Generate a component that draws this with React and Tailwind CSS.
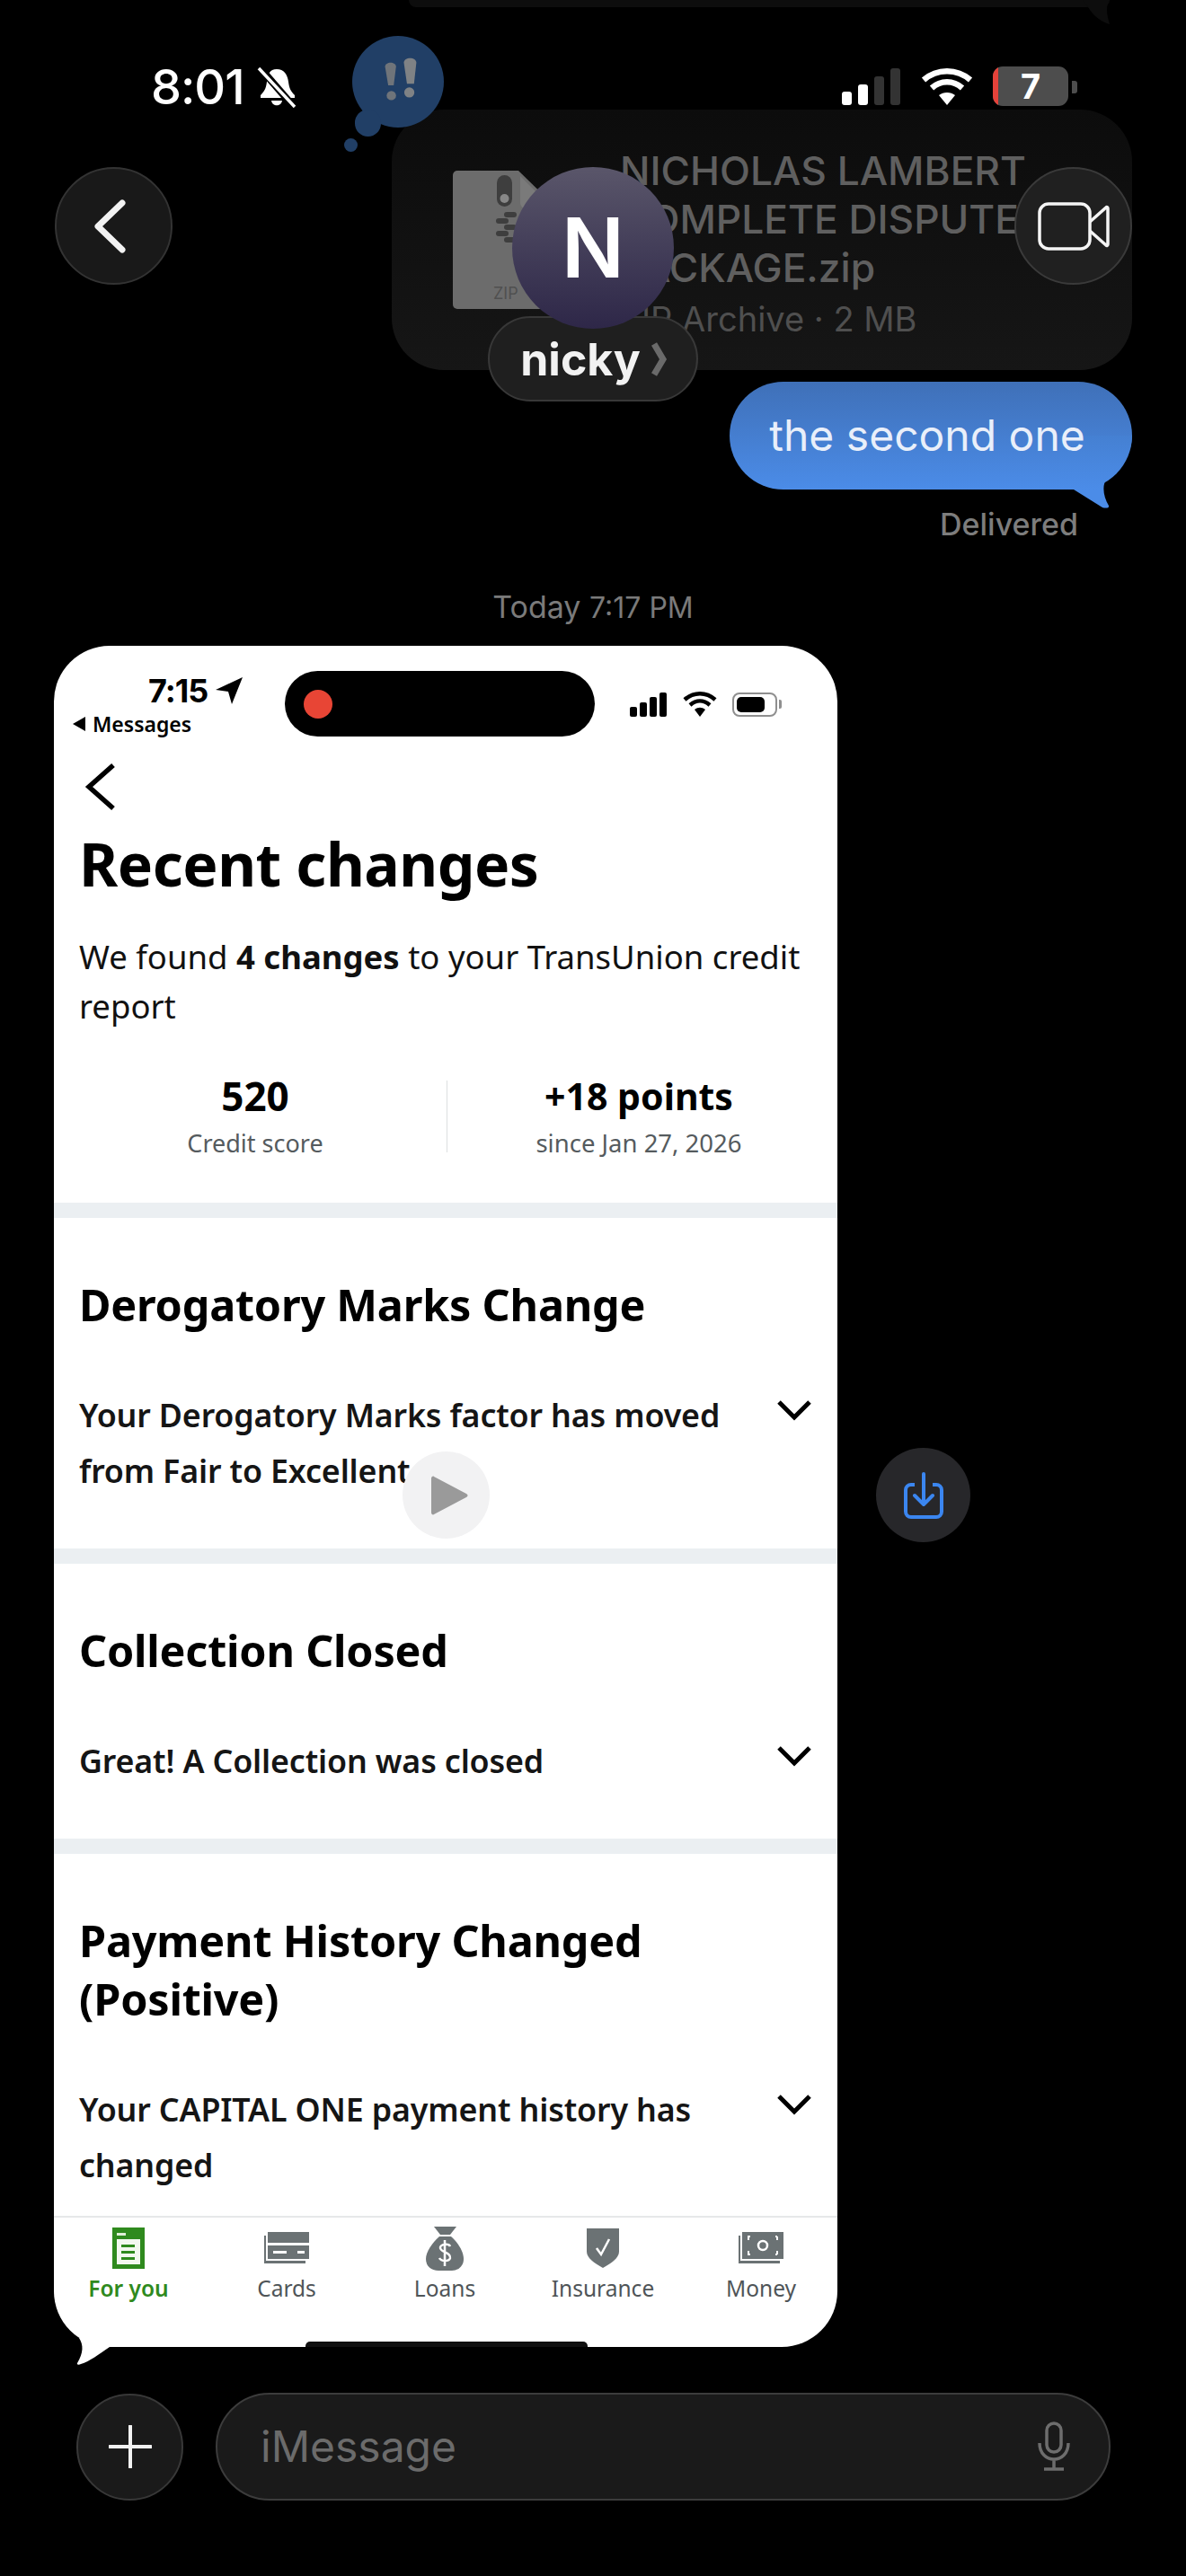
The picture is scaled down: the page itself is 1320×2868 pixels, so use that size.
const tabs = [
  { label: "For you", active: true, icon: <ForYouIcon /> },
  { label: "Cards", icon: <CardsIcon /> },
  { label: "Loans", icon: <LoansIcon /> },
  { label: "Insurance", icon: <InsuranceIcon /> },
  { label: "Money", icon: <MoneyIcon /> },
]

function ForYouIcon() {
  return (
    <svg width="36" height="46" viewBox="0 0 36 46">
      <rect width="36" height="46" fill="#2f8a1e" />
      <rect x="5" y="6" width="10" height="3" fill="#dff0d8" />
      <rect x="5" y="13" width="26" height="28" fill="#f2f8ef" />
      <rect x="10" y="19" width="15" height="3" fill="#2f8a1e" />
      <rect x="10" y="26" width="15" height="3" fill="#2f8a1e" />
      <rect x="10" y="33" width="15" height="3" fill="#2f8a1e" />
    </svg>
  )
}

function CardsIcon() {
  return (
    <svg width="50" height="36" viewBox="0 0 50 36">
      <path d="M0 4h2v28h44v3H0z" fill="#6b7274" />
      <rect x="4" y="0" width="46" height="12" fill="#6b7274" />
      <rect x="4" y="15" width="46" height="15" fill="#6b7274" />
      <rect x="10" y="21" width="15" height="3" fill="#fff" />
      <rect x="37" y="21" width="8" height="3" fill="#fff" />
    </svg>
  )
}

function LoansIcon() {
  return (
    <svg width="42" height="49" viewBox="0 0 42 49">
      <path d="M9 0h25l-7 9H16z" fill="#6b7274" />
      <path d="M15 11h13c8 7 14 17 14 25 0 8-6 13-13 13H14C6 49 0 44 0 36c0-8 7-18 15-25z" fill="#6b7274" />
      <path d="M27 22c-1-3-10-3-11 1-1 6 12 5 11 12-1 4-10 4-12 0M21 15v29" fill="none" stroke="#fff" strokeWidth="2.5" />
    </svg>
  )
}

function InsuranceIcon() {
  return (
    <svg width="36" height="44" viewBox="0 0 36 44">
      <path d="M0 0h36v26c0 7-9 13-18 18C9 39 0 33 0 26z" fill="#6b7274" />
      <path d="M11 22l5 7 9-17" fill="none" stroke="#fff" strokeWidth="2.5" />
    </svg>
  )
}

function MoneyIcon() {
  return (
    <svg width="50" height="36" viewBox="0 0 50 36">
      <path d="M0 4h2v28h44v3H0z" fill="#6b7274" />
      <rect x="4" y="0" width="46" height="30" fill="#6b7274" />
      <circle cx="27" cy="15" r="5" fill="none" stroke="#fff" strokeWidth="2.5" />
      <path d="M11 9V5h2M43 5h-2M43 5v4M11 21v4h2M43 25h-2M43 25v-4" fill="none" stroke="#fff" strokeWidth="2" />
    </svg>
  )
}

function Section({ title, lines, className }) {
  return (
    <div className={`px-7 ${className}`}>
      <h2 className="text-[48.5px] leading-[65px] font-bold text-black tracking-[-0.2px]">{title}</h2>
      <div className="flex justify-between mt-[59px]">
        <p className="text-[35.8px] leading-[62px] font-semibold text-[#151515] tracking-[-0.15px] w-[780px]">{lines}</p>
        <svg className="mt-[14px] shrink-0" width="40" height="24" viewBox="0 0 40 24">
          <path d="M3 3l17 17L37 3" fill="none" stroke="#000" strokeWidth="5" />
        </svg>
      </div>
    </div>
  )
}

export default function App() {
  return (
    <div className="relative w-[1320px] h-[2868px] bg-black overflow-hidden font-['Inter',sans-serif]">
      {/* message list */}
      <div className="flex flex-col">
        <div className="relative self-end mr-[85px] w-[780px] h-[8px] bg-[#0d0d0d] rounded-b-[20px]">
          <svg className="absolute right-0 top-0" width="30" height="30" viewBox="0 0 30 30">
            <path d="M0 0h30c-4 6 -4 14 0 27C22 25 12 18 6 8z" fill="#0d0d0d" />
          </svg>
        </div>

        <div className="self-end mr-[60px] mt-[114px] w-[824px] h-[290px] rounded-[58px] bg-gradient-to-b from-[#0c0c0c] to-[#161616] flex items-center pl-[68px]">
          <div className="relative w-[116px] h-[154px] mr-[70px] shrink-0">
            <svg className="absolute left-0 top-0" width="116" height="154" viewBox="0 0 116 154">
              <path d="M5 0h68l43 42v107a5 5 0 0 1-5 5H5a5 5 0 0 1-5-5V5a5 5 0 0 1 5-5z" fill="#6c6c6c" />
              <path d="M75 6v30a6 6 0 0 0 6 6h30z" fill="#7a7a7a" />
              <rect x="49" y="5" width="17" height="35" rx="8.5" fill="#3e3e3e" />
              <circle cx="57.5" cy="31" r="5" fill="#888" />
              <rect x="57" y="46" width="14" height="6" rx="3" fill="#3e3e3e" />
              <rect x="48" y="53" width="14" height="6" rx="3" fill="#3e3e3e" />
              <rect x="57" y="60" width="14" height="6" rx="3" fill="#3e3e3e" />
              <rect x="48" y="67" width="14" height="6" rx="3" fill="#3e3e3e" />
              <rect x="57" y="74" width="14" height="6" rx="3" fill="#3e3e3e" />
            </svg>
            <span className="absolute left-[45px] bottom-[6px] text-[18px] leading-[22px] text-[#505050]">ZIP</span>
          </div>
          <div className="pt-[7px]">
            <p className="text-[44.3px] leading-[54px] font-medium text-[#5f5f5f] w-[490px]">
              NICHOLAS LAMBERT COMPLETE DISPUTE PACKAGE.zip
            </p>
            <p className="text-[38px] leading-[48px] text-[#4f4f4f] mt-[6px]">ZIP Archive · 2 MB</p>
          </div>
        </div>

        <div className="relative self-end mr-[60px] mt-[13px] w-[448px] h-[120px] rounded-[60px] bg-gradient-to-b from-[#3f70b8] to-[#4b8ce8] flex items-center justify-center">
          <svg className="absolute right-0 top-[60px]" width="80" height="85" viewBox="0 0 80 85">
            <defs>
              <linearGradient id="tailFill" gradientUnits="userSpaceOnUse" x1="0" y1="0" x2="0" y2="60">
                <stop offset="0" stopColor="#4580d2" />
                <stop offset="1" stopColor="#4b8ce8" />
              </linearGradient>
            </defs>
            <path d="M0 0v60h15L47 80c3 1 8 1 7-2C48 68 46 55 52 48 62 38 79 28 80 0z" fill="url(#tailFill)" />
          </svg>
          <span className="relative text-[48px] text-[#e9effa] -ml-[8px]">the second one</span>
        </div>

        <p className="self-end mr-[120px] mt-[17px] text-[34px] leading-[44px] font-medium text-[#7d7d7d]">Delivered</p>
        <p className="self-center mt-[48px] text-[34px] leading-[44px] text-[#7a7a7a]">
          Today <span className="text-[32px]">7:17 PM</span>
        </p>

        {/* screenshot attachment */}
        <div className="relative mt-[20px] ml-[60px] w-[872px] h-[1894px]">
          <div className="w-full h-full bg-white rounded-[62px] overflow-hidden font-['Noto_Sans',sans-serif] flex flex-col">
            <div className="relative h-[118px] shrink-0">
              <div className="absolute left-[105px] top-[31px] flex items-center gap-[8px]">
                <span className="text-[36px] leading-[38px] font-bold text-black font-['Inter',sans-serif] tracking-[-1px]">7:15</span>
                <svg width="32" height="32" viewBox="0 0 32 32">
                  <path d="M31 1L1 15l14 2 4 14z" fill="#000" />
                </svg>
              </div>
              <div className="absolute left-[21px] top-[73px] flex items-center gap-[8px]">
                <span className="w-0 h-0 border-y-[8px] border-y-transparent border-r-[14px] border-r-black" />
                <span className="text-[23px] leading-[28px] font-semibold text-black">Messages</span>
              </div>
              <div className="absolute left-[257px] top-[28px] w-[345px] h-[73px] rounded-full bg-black flex items-center pl-[21px]">
                <span className="w-[32px] h-[32px] rounded-full bg-[#e84535]" />
              </div>
              <div className="absolute left-[641px] top-[52px] flex items-end gap-[3px] h-[27px]">
                <span className="w-[8px] h-[11px] bg-black rounded-[2px]" />
                <span className="w-[8px] h-[16px] bg-black rounded-[2px]" />
                <span className="w-[8px] h-[22px] bg-black rounded-[2px]" />
                <span className="w-[8px] h-[27px] bg-black rounded-[2px]" />
              </div>
              <svg className="absolute left-[699px] top-[50px]" width="40" height="30" viewBox="0 0 40 30">
                <path d="M3 10c10-9 24-9 34 0M9 16c7-6 15-6 22 0" fill="none" stroke="#000" strokeWidth="4.5" />
                <path d="M14 21c4-3 8-3 12 0l-6 8z" fill="#000" />
              </svg>
              <div className="absolute left-[755px] top-[52px] w-[50px] h-[27px] rounded-[8px] border-[2px] border-[#8f8f8f] p-[3px]">
                <div className="w-[31px] h-full bg-black rounded-[5px]" />
              </div>
              <span className="absolute left-[807px] top-[60px] w-[3px] h-[10px] bg-[#8f8f8f] rounded-r-[2px]" />
            </div>

            <svg className="ml-[34px] mt-[12px] shrink-0" width="36" height="54" viewBox="0 0 36 54">
              <path d="M32 3L5 27l27 24" fill="none" stroke="#000" strokeWidth="5.5" />
            </svg>

            <div className="px-7 shrink-0">
              <h1 className="mt-[16px] text-[66px] leading-[84px] font-bold text-black tracking-[-0.5px]">Recent changes</h1>
              <p className="mt-[35px] text-[36.5px] leading-[55px] text-[#111]">
                We found <b className="font-bold">4 changes</b> to your TransUnion credit report
              </p>
            </div>

            <div className="flex items-center mt-[47px] shrink-0">
              <div className="flex-1 text-center pl-[11px]">
                <p className="text-[44px] leading-[50px] font-bold text-black">520</p>
                <p className="mt-[11px] text-[27px] leading-[34px] text-[#555b5e]">Credit score</p>
              </div>
              <div className="w-px h-[80px] bg-[#dcdfe0]" />
              <div className="flex-1 text-center pr-[8px]">
                <p className="text-[41px] leading-[50px] font-bold text-black">+18 points</p>
                <p className="mt-[11px] text-[27.5px] leading-[34px] text-[#555b5e]">since Jan 27, 2026</p>
              </div>
            </div>

            <div className="mt-[49px] h-[17px] bg-[#ebeff2] shrink-0" />
            <Section
              className="pt-[64px] pb-[56px] shrink-0"
              title="Derogatory Marks Change"
              lines="Your Derogatory Marks factor has moved from Fair to Excellent"
            />
            <div className="h-[17px] bg-[#ebeff2] shrink-0" />
            <Section className="pt-[64px] pb-[56px] shrink-0" title="Collection Closed" lines="Great! A Collection was closed" />
            <div className="h-[17px] bg-[#ebeff2] shrink-0" />
            <Section
              className="pt-[64px] pb-[8px] shrink-0"
              title="Payment History Changed (Positive)"
              lines="Your CAPITAL ONE payment history has changed"
            />

            <div className="mt-auto relative h-[146px] border-t-2 border-[#e6e8e9] flex -mx-[5px] shrink-0">
              {tabs.map((tab) => (
                <div key={tab.label} className="w-[176px] shrink-0 flex flex-col items-center">
                  <div className="h-[50px] flex items-center mt-[9px]">{tab.icon}</div>
                  <span
                    className={`mt-[3px] text-[24.5px] leading-[34px] ${tab.active ? "font-semibold text-[#2f8a1e]" : "text-[#4f5558]"}`}
                  >
                    {tab.label}
                  </span>
                </div>
              ))}
              <div className="absolute left-[285px] bottom-0 w-[314px] h-[6px] bg-[#111] rounded-t-[5px]" />
            </div>
          </div>
          <svg className="absolute left-[20px] bottom-[-23px]" width="42" height="45" viewBox="0 0 42 45">
            <path d="M8 12C13 20 13 28 6 40c-1 2 2 2 4 1C20 38 30 30 42 22V0z" fill="#fff" />
          </svg>
        </div>

        {/* input bar */}
        <div className="flex items-center mt-[51px] ml-[85px] gap-[36px]">
          <div className="w-[119px] h-[119px] rounded-full bg-[#1a1a1a] border-2 border-[#383838] flex items-center justify-center">
            <svg width="48" height="48" viewBox="0 0 48 48">
              <path d="M24 1v46M1 24h46" stroke="#f2f2f2" strokeWidth="4" strokeLinecap="round" />
            </svg>
          </div>
          <div className="w-[996px] h-[120px] rounded-[60px] bg-[#1a1a1a] border-2 border-[#3c3c3c] flex items-center justify-between pl-[48px] pr-[42px]">
            <span className="text-[48px] text-[#6b6b6b]">iMessage</span>
            <svg width="38" height="56" viewBox="0 0 38 56">
              <rect x="11" y="2" width="16" height="32" rx="8" fill="none" stroke="#6d6d6d" strokeWidth="3.5" />
              <path d="M3 24c0 24 32 24 32 0M19 42v10M8 53h22" fill="none" stroke="#6d6d6d" strokeWidth="3.5" />
            </svg>
          </div>
        </div>
      </div>

      {/* status bar */}
      <div className="absolute left-[168px] top-[70px] flex items-center gap-[14px]">
        <span className="text-[54px] leading-[54px] font-medium text-white tracking-[-1px]">8:01</span>
        <svg width="44" height="46" viewBox="0 0 44 46">
          <path d="M22 3c8 0 12 6 13 14 1 8 3 11 7 15v3H4v-3c4-4 6-7 7-15 1-8 3-14 11-14z" fill="#fff" />
          <path d="M16 38h12c-1 7-11 7-12 0z" fill="#fff" />
          <path d="M3 1l38 44" stroke="#000" strokeWidth="8" />
          <path d="M2 2l40 43" stroke="#fff" strokeWidth="3.5" />
        </svg>
      </div>
      <div className="absolute left-[392px] top-[40px] w-[102px] h-[102px] rounded-full bg-[#213f66] flex items-center justify-center">
        <svg className="ml-[6px] -mt-[4px]" width="40" height="56" viewBox="0 0 46 58">
          <path d="M3 12c0-7 14-7 14 0l-3 24h-7z" fill="#6f747a" />
          <path d="M27 7c0-8 16-8 16 0l-3 27h-9z" fill="#7f8285" />
          <circle cx="11" cy="49" r="6" fill="#6f747a" />
          <circle cx="34" cy="45" r="6.5" fill="#7f8285" />
        </svg>
      </div>
      <div className="absolute left-[395px] top-[122px] w-[29px] h-[30px] rounded-full bg-[#213f66]" />
      <div className="absolute left-[383px] top-[154px] w-[15px] h-[15px] rounded-full bg-[#213f66]" />

      <div className="absolute left-[937px] top-[76px] flex items-end gap-[7px] h-[41px]">
        <span className="w-[11px] h-[15px] bg-white rounded-[3px]" />
        <span className="w-[11px] h-[23px] bg-white rounded-[3px]" />
        <span className="w-[11px] h-[32px] bg-[#333] rounded-[3px]" />
        <span className="w-[11px] h-[41px] bg-[#333] rounded-[3px]" />
      </div>
      <svg className="absolute left-[1025px] top-[75px]" width="58" height="42" viewBox="0 0 58 42">
        <path d="M3 14c15-13 37-13 52 0M12 23c10-9 24-9 34 0" fill="none" stroke="#fff" strokeWidth="6.5" />
        <path d="M20 31c5-4 13-4 18 0l-9 11z" fill="#fff" />
      </svg>
      <div className="absolute left-[1105px] top-[74px] w-[84px] h-[44px] rounded-[11px] bg-[#4d4d4d] overflow-hidden flex items-center justify-center">
        <span className="absolute left-0 top-0 bottom-0 w-[6px] bg-[#e5423a]" />
        <span className="text-[38px] leading-[44px] font-bold text-white">7</span>
      </div>
      <span className="absolute left-[1193px] top-[90px] w-[6px] h-[14px] bg-[#4d4d4d] rounded-r-[3px]" />

      {/* header buttons */}
      <div className="absolute left-[61px] top-[186px] w-[131px] h-[131px] rounded-full bg-[#191919] border-2 border-[#333] flex items-center justify-center">
        <svg className="-ml-[10px]" width="38" height="60" viewBox="0 0 38 60">
          <path d="M33 4L6 30l27 26" fill="none" stroke="#f2f2f2" strokeWidth="7" strokeLinecap="round" strokeLinejoin="round" />
        </svg>
      </div>
      <div className="absolute left-[1129px] top-[186px] w-[131px] h-[131px] rounded-full bg-[#202020] border-2 border-[#3a3a3a] flex items-center justify-center">
        <svg width="80" height="54" viewBox="0 0 80 54">
          <rect x="2" y="2" width="56" height="50" rx="10" fill="none" stroke="#f5f5f5" strokeWidth="3.5" />
          <path d="M58 22L76 6c1-1 2 0 2 1v40c0 1-1 2-2 1L58 32" fill="none" stroke="#f5f5f5" strokeWidth="3.5" />
        </svg>
      </div>
      <div className="absolute left-[543px] top-[352px] w-[234px] h-[95px] rounded-[48px] bg-[#1f1f1f] border-2 border-[#383838] flex items-center justify-center gap-[12px]">
        <span className="text-[50px] leading-[60px] font-bold text-[#f2f2f2] ml-[2px]">nicky</span>
        <svg width="18" height="38" viewBox="0 0 18 38">
          <path d="M3 2l10 17-10 17" fill="none" stroke="#6a6a6a" strokeWidth="7" />
        </svg>
      </div>
      <div className="absolute left-[570px] top-[186px] w-[180px] h-[180px] rounded-full bg-gradient-to-b from-[#5a566a] to-[#2e2748] flex items-center justify-center">
        <span className="text-[92px] leading-[100px] font-semibold text-white">N</span>
      </div>

      {/* video controls */}
      <div className="absolute left-[448px] top-[1616px] w-[97px] h-[97px] rounded-full bg-[#f2f2f3] flex items-center justify-center">
        <svg className="ml-[8px]" width="42" height="46" viewBox="0 0 42 46">
          <path d="M3 2l36 19c2 1 2 3 0 4L3 44c-1 1-3 0-3-2V4c0-2 2-3 3-2z" fill="#9a9a9a" />
        </svg>
      </div>
      <div className="absolute left-[975px] top-[1612px] w-[105px] h-[105px] rounded-full bg-[#27272a] flex items-center justify-center">
        <svg width="44" height="52" viewBox="0 0 44 52">
          <path d="M12 14H8a6 6 0 0 0-6 6v24a6 6 0 0 0 6 6h28a6 6 0 0 0 6-6V20a6 6 0 0 0-6-6h-4" fill="none" stroke="#3b86f0" strokeWidth="4" />
          <path d="M22 2v34M12 26l10 10 10-10" fill="none" stroke="#3b86f0" strokeWidth="4" strokeLinecap="round" strokeLinejoin="round" />
        </svg>
      </div>
    </div>
  )
}
